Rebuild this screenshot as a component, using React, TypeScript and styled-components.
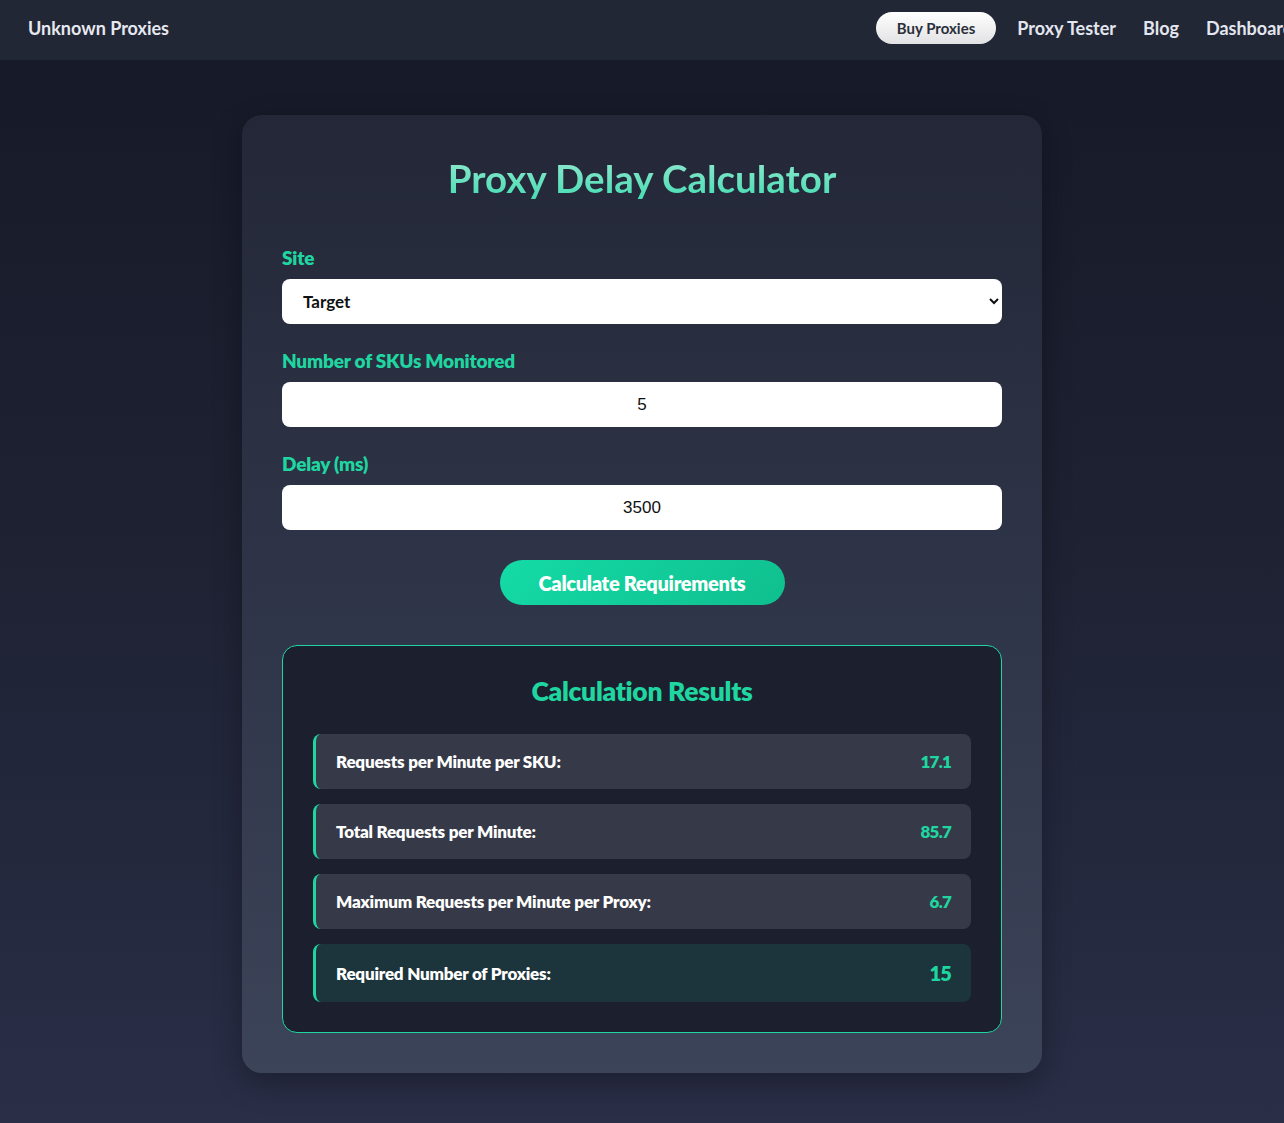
import React, { useState } from 'react';
import styled, { createGlobalStyle } from 'styled-components';

const GlobalStyle = createGlobalStyle`
  * { box-sizing: border-box; }
  html, body {
    margin: 0;
    padding: 0;
    overflow-x: hidden;
  }
  body {
    font-family: 'Lato', 'Inter', sans-serif;
    background: linear-gradient(180deg, #151927 0%, #1e2233 50%, #2a2e47 100%);
    min-height: 1123px;
    color: #e6e8ef;
  }
`;

const Nav = styled.nav`
  height: 60px;
  background: #222736;
  display: flex;
  align-items: center;
  justify-content: space-between;
  padding: 0 0 4px 28px;
  white-space: nowrap;
`;

const Brand = styled.div`
  font-size: 18px;
  font-weight: 700;
  color: #e7e9f0;
`;

const NavLinks = styled.div`
  display: flex;
  align-items: center;
  gap: 27px;
  margin-right: -9px;
`;

const NavLink = styled.a`
  font-size: 18px;
  font-weight: 700;
  color: #e3e6ee;
  text-decoration: none;
`;

const PillLink = styled.a`
  font-size: 15px;
  font-weight: 700;
  color: #2b2f3a;
  text-decoration: none;
  background: linear-gradient(180deg, #ffffff 0%, #e2e2e4 100%);
  border-radius: 16px;
  height: 32px;
  padding: 0 21px;
  display: flex;
  align-items: center;
  margin-right: -6px;
`;

const Main = styled.main`
  display: flex;
  justify-content: center;
  padding: 55px 0 49px;
`;

const Card = styled.section`
  width: 800px;
  border-radius: 20px;
  padding: 38px 40px 40px;
  background: linear-gradient(180deg, #232737 0%, #30364a 55%, #3c4459 100%);
  box-shadow: 0 10px 30px rgba(0, 0, 0, 0.3);
`;

const Title = styled.h1`
  margin: 0 0 44px;
  text-align: center;
  font-size: 38.5px;
  font-weight: 700;
  line-height: 50px;
  background: linear-gradient(180deg, #9be9d2 0%, #3fdcb0 100%);
  -webkit-background-clip: text;
  background-clip: text;
  color: transparent;
`;

const Field = styled.div`
  display: flex;
  flex-direction: column;
  margin-bottom: 26px;
`;

const Label = styled.label`
  font-size: 19px;
  font-weight: 800;
  color: #1fd6a1;
  margin-bottom: 10px;
  line-height: 22px;
  letter-spacing: -0.2px;
`;

const Select = styled.select`
  height: 45px;
  border: none;
  border-radius: 8px;
  background: #ffffff;
  padding: 0 16px 0 17px;
  font-family: 'Lato', sans-serif;
  font-size: 17px;
  font-weight: 700;
  color: #111;
  outline: none;
`;

const NumberInput = styled.input`
  height: 45px;
  border: none;
  border-radius: 8px;
  background: #ffffff;
  text-align: center;
  font-family: 'Liberation Sans', Arial, sans-serif;
  font-size: 17px;
  color: #111;
  outline: none;
  appearance: textfield;
  -moz-appearance: textfield;
  &::-webkit-outer-spin-button,
  &::-webkit-inner-spin-button {
    -webkit-appearance: none;
    margin: 0;
  }
`;

const ButtonRow = styled.div`
  display: flex;
  justify-content: center;
  margin-top: 30px;
`;

const CalcButton = styled.button`
  width: 285px;
  height: 45px;
  border: none;
  border-radius: 23px;
  background: linear-gradient(135deg, #14dba6 0%, #0fbf8e 100%);
  color: #ffffff;
  font-family: 'Lato', sans-serif;
  font-size: 20px;
  font-weight: 800;
  letter-spacing: -0.3px;
  cursor: pointer;
`;

const Results = styled.div`
  margin-top: 40px;
  border: 1px solid #1fd6a1;
  border-radius: 15px;
  background: #1c1f2d;
  padding: 28px 30px 30px;
`;

const ResultsTitle = styled.h2`
  margin: 0 0 26px;
  text-align: center;
  font-size: 26.5px;
  font-weight: 800;
  line-height: 34px;
  color: #1fd6a1;
  letter-spacing: -0.3px;
`;

const ResultList = styled.div`
  display: flex;
  flex-direction: column;
  gap: 15px;
`;

const ResultRow = styled.div<{ $highlight?: boolean }>`
  display: flex;
  justify-content: space-between;
  align-items: center;
  height: ${(p) => (p.$highlight ? '58px' : '55px')};
  padding: 0 20px;
  border-left: 3px solid #1fd6a1;
  border-radius: 8px;
  background: ${(p) => (p.$highlight ? '#1c343b' : '#363a48')};
`;

const ResultLabel = styled.span`
  font-size: 17px;
  font-weight: 800;
  color: #ffffff;
  letter-spacing: -0.2px;
`;

const ResultValue = styled.span<{ $large?: boolean }>`
  font-size: ${(p) => (p.$large ? '20px' : '17px')};
  font-weight: 800;
  color: #1fd6a1;
  letter-spacing: -0.8px;
`;

const results = [
  { label: 'Requests per Minute per SKU:', value: '17.1' },
  { label: 'Total Requests per Minute:', value: '85.7' },
  { label: 'Maximum Requests per Minute per Proxy:', value: '6.7' },
  { label: 'Required Number of Proxies:', value: '15', highlight: true },
];

export default function App() {
  const [site, setSite] = useState('target');
  const [skus, setSkus] = useState('5');
  const [delay, setDelay] = useState('3500');

  return (
    <>
      <GlobalStyle />
      <Nav>
        <Brand>Unknown Proxies</Brand>
        <NavLinks>
          <PillLink href="#">Buy Proxies</PillLink>
          <NavLink href="#">Proxy Tester</NavLink>
          <NavLink href="#">Blog</NavLink>
          <NavLink href="#">Dashboard</NavLink>
        </NavLinks>
      </Nav>
      <Main>
        <Card>
          <Title>Proxy Delay Calculator</Title>
          <Field>
            <Label htmlFor="site">Site</Label>
            <Select id="site" value={site} onChange={(e) => setSite(e.target.value)}>
              <option value="target">Target</option>
              <option value="walmart">Walmart</option>
              <option value="bestbuy">Best Buy</option>
            </Select>
          </Field>
          <Field>
            <Label htmlFor="skus">Number of SKUs Monitored</Label>
            <NumberInput id="skus" type="number" value={skus} onChange={(e) => setSkus(e.target.value)} />
          </Field>
          <Field>
            <Label htmlFor="delay">Delay (ms)</Label>
            <NumberInput id="delay" type="number" value={delay} onChange={(e) => setDelay(e.target.value)} />
          </Field>
          <ButtonRow>
            <CalcButton>Calculate Requirements</CalcButton>
          </ButtonRow>
          <Results>
            <ResultsTitle>Calculation Results</ResultsTitle>
            <ResultList>
              {results.map((r) => (
                <ResultRow key={r.label} $highlight={r.highlight}>
                  <ResultLabel>{r.label}</ResultLabel>
                  <ResultValue $large={r.highlight}>{r.value}</ResultValue>
                </ResultRow>
              ))}
            </ResultList>
          </Results>
        </Card>
      </Main>
    </>
  );
}
